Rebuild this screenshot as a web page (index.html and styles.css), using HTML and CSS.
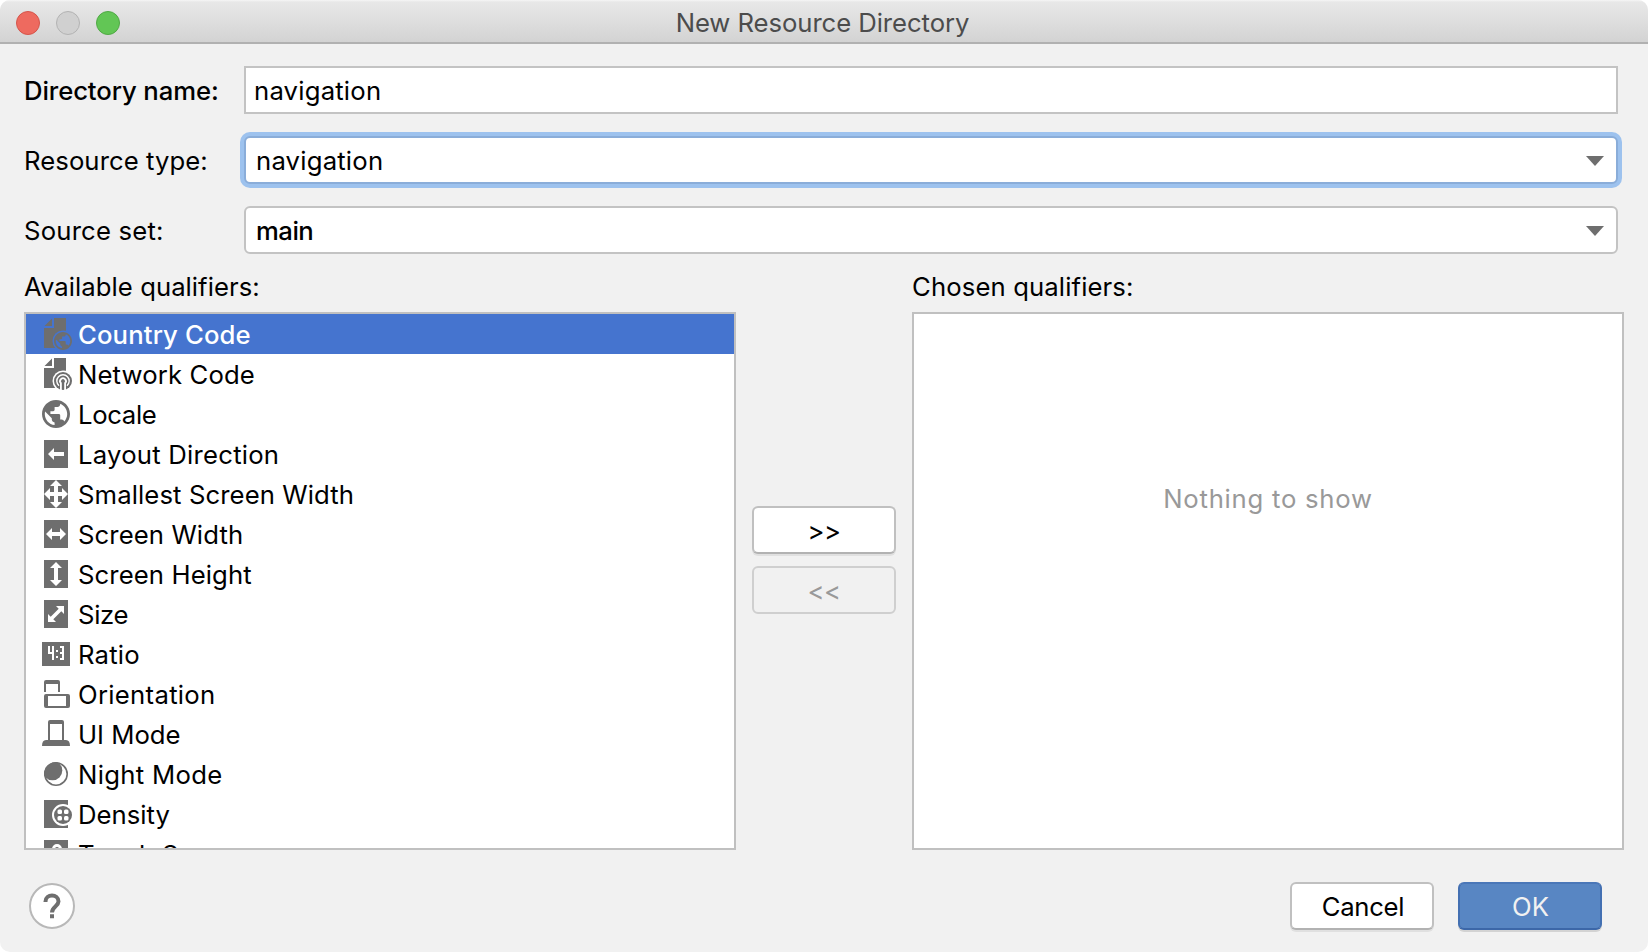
FILE: index.html
```
<!DOCTYPE html>
<html lang="en">
<head>
<meta charset="utf-8">
<title>New Resource Directory</title>
<link rel="stylesheet" href="styles.css">
</head>
<body>
<div class="dialog">
  <header class="titlebar">
    <div class="lights"><span class="light close"></span><span class="light min"></span><span class="light max"></span></div>
    <h1 class="title"><span class="t-title">New Resource Directory</span></h1>
  </header>
  <main class="content">
    <div class="form">
      <div class="row"><label class="label"><span class="t-dir">Directory name:</span></label><div class="field text"><span class="t-nav">navigation</span></div></div>
      <div class="row"><label class="label"><span class="t-type">Resource type:</span></label><div class="field combo focused"><span class="t-nav">navigation</span><svg class="arrow" viewBox="0 0 18 10"><path d="M0 0H18L9 10Z"/></svg></div></div>
      <div class="row"><label class="label"><span class="t-set">Source set:</span></label><div class="field combo"><span class="t-main">main</span><svg class="arrow" viewBox="0 0 18 10"><path d="M0 0H18L9 10Z"/></svg></div></div>
    </div>
    <div class="lists">
      <section class="pane">
        <h2 class="heading"><span class="t-avail">Available qualifiers:</span></h2>
        <ul class="list">
          <li class="item selected"><svg class="icon" viewBox="0 0 32 32"><mask id="cut"><path fill="#fff" d="M0 0H32V32H0Z"/><circle cx="23" cy="23" r="10.500" fill="#000"/></mask><path mask="url(#cut)" d="M4.500 8L12 .5V8ZM14 0H26V30H4V10H14Z"/><path transform="translate(12.200 12.200) scale(.9)" d="M12 2C6.480 2 2 6.480 2 12s4.480 10 10 10 10-4.480 10-10S17.520 2 12 2zm-1 17.930c-3.950-.49-7-3.850-7-7.930 0-.62.08-1.210.21-1.790L9 15v1c0 1.100.9 2 2 2v1.930zm6.900-2.540c-.26-.81-1-1.390-1.900-1.390h-1v-3c0-.55-.45-1-1-1H8v-2h2c.55 0 1-.45 1-1V7h2c1.100 0 2-.9 2-2v-.41c2.930 1.190 5 4.060 5 7.410 0 2.080-.8 3.970-2.100 5.390z"/></svg><span class="t-i1">Country Code</span></li>
          <li class="item"><svg class="icon" viewBox="0 0 32 32"><path mask="url(#cut)" d="M4.500 8L12 .5V8ZM14 0H26V30H4V10H14Z"/><circle cx="23" cy="23" r="9"/><path class="wline arc" d="M19 27.700A6.200 6.200 0 1 1 27 27.700"/><path class="wline leg" d="M20.900 32V25.200A2.900 2.900 0 1 1 25.100 25.200V32"/></svg><span class="t-i2">Network Code</span></li>
          <li class="item"><svg class="icon" viewBox="0 0 32 32"><path transform="translate(-.8 -.8) scale(1.400)" d="M12 2C6.480 2 2 6.480 2 12s4.480 10 10 10 10-4.480 10-10S17.520 2 12 2zm-1 17.930c-3.950-.49-7-3.850-7-7.930 0-.62.08-1.210.21-1.790L9 15v1c0 1.100.9 2 2 2v1.930zm6.900-2.540c-.26-.81-1-1.390-1.900-1.390h-1v-3c0-.55-.45-1-1-1H8v-2h2c.55 0 1-.45 1-1V7h2c1.100 0 2-.9 2-2v-.41c2.930 1.190 5 4.060 5 7.410 0 2.080-.8 3.970-2.100 5.390z"/></svg><span class="t-i3">Locale</span></li>
          <li class="item"><svg class="icon" viewBox="0 0 32 32"><path d="M4 2H28V30H4Z"/><path class="w" d="M8 16L14 10V14H24V18H14V22Z"/></svg><span class="t-i4">Layout Direction</span></li>
          <li class="item"><svg class="icon" viewBox="0 0 32 32"><path d="M4 2H28V30H4Z"/><path class="w" d="M16 2L22 8H18V14H22V10L28 16L22 22V18H18V24H22L16 30L10 24H14V18H10V22L4 16L10 10V14H14V8H10Z"/></svg><span class="t-i5">Smallest Screen Width</span></li>
          <li class="item"><svg class="icon" viewBox="0 0 32 32"><path d="M4 2H28V30H4Z"/><path class="w" d="M6 16L12 10V14H20V10L26 16L20 22V18H12V22Z"/></svg><span class="t-i6">Screen Width</span></li>
          <li class="item"><svg class="icon" viewBox="0 0 32 32"><path d="M4 2H28V30H4Z"/><path class="w" d="M16 4L22 10H18V22H22L16 28L10 22H14V10H10Z"/></svg><span class="t-i7">Screen Height</span></li>
          <li class="item"><svg class="icon" viewBox="0 0 32 32"><path d="M4 2H28V30H4Z"/><path class="w" d="M24 8V16L21.300 13.300L13.300 21.300L16 24H8V16L10.700 18.700L18.700 10.700L16 8Z"/></svg><span class="t-i8">Size</span></li>
          <li class="item"><svg class="icon" viewBox="0 0 32 32"><path d="M2 4H30V28H2Z"/><path class="w" d="M8 8H10V14H12V8H14V22H12V16H8ZM16 12H18V14H16ZM16 18H18V20H16ZM20 8H24V22H20V20H22V16H20V14H22V10H20Z"/></svg><span class="t-i9">Ratio</span></li>
          <li class="item"><svg class="icon" viewBox="0 0 32 32"><path d="M4 14V4Q4 2 6 2H18Q20 2 20 4V14H18V6H6V14ZM6 16H28Q30 16 30 18V28Q30 30 28 30H6Q4 30 4 28V18Q4 16 6 16ZM8 18V28H26V18Z" fill-rule="evenodd"/></svg><span class="t-i10">Orientation</span></li>
          <li class="item"><svg class="icon" viewBox="0 0 32 32"><path d="M8 22V4Q8 2 10 2H22Q24 2 24 4V22H26Q30 22 30 28H2Q2 22 6 22ZM10 6V22H22V6Z" fill-rule="evenodd"/></svg><span class="t-i11">UI Mode</span></li>
          <li class="item"><svg class="icon" viewBox="0 0 32 32"><clipPath id="moon"><circle cx="16" cy="16" r="12"/></clipPath><circle cx="16" cy="16" r="11.200" fill="none" stroke="#6e6e6e" stroke-width="1.600"/><circle cx="12.500" cy="12.500" r="9.800" clip-path="url(#moon)"/></svg><span class="t-i12">Night Mode</span></li>
          <li class="item"><svg class="icon" viewBox="0 0 32 32"><path d="M4 2H28V30H4Z"/><circle class="w" cx="23" cy="17" r="11"/><circle cx="23" cy="17" r="9"/><g class="w"><rect x="17.500" y="11.500" width="4.500" height="4.500" rx="1.500"/><rect x="24" y="11.500" width="4.500" height="4.500" rx="1.500"/><rect x="17.500" y="18" width="4.500" height="4.500" rx="1.500"/><rect x="24" y="18" width="4.500" height="4.500" rx="1.500"/></g></svg><span class="t-i13">Density</span></li>
          <li class="item"><svg class="icon" viewBox="0 0 32 32"><path d="M4 2H28V30H4Z"/><path class="w" d="M12 16V11A5 5 0 0 1 22 11V16H19V11A2 2 0 0 0 15 11V16Z"/></svg><span class="t-i14">Touch Screen</span></li>
        </ul>
      </section>
      <div class="movers"><button class="btn"><span class="t-mv">&gt;&gt;</span></button><button class="btn disabled"><span class="t-mv">&lt;&lt;</span></button></div>
      <section class="pane">
        <h2 class="heading"><span class="t-chosen">Chosen qualifiers:</span></h2>
        <div class="list empty"><span class="t-none">Nothing to show</span></div>
      </section>
    </div>
    <footer class="footer">
      <button class="help"><svg viewBox="0 0 46 46"><path class="q" d="M16.500 19V18.500C16.500 10.500 29.500 10.500 29.500 18.500C29.500 23 23 23.500 23 29.500"/><path class="qd" d="M21 31.300h4v4h-4z"/></svg></button>
      <div class="actions"><button class="btn"><span class="t-cancel">Cancel</span></button><button class="btn primary"><span class="t-ok">OK</span></button></div>
    </footer>
  </main>
</div>
</body>
</html>
```
FILE: styles.css
```
* { box-sizing: border-box; }
body { margin: 0; background: #fff; }
.dialog { width: 1648px; height: 952px; background: #f1f1f1; border-radius: 10px; overflow: hidden; font: 25.7px/40px Inter, "Liberation Sans", sans-serif; color: #000; }
.titlebar { height: 44px; padding: 0 2px 0 16px; display: grid; grid-template-columns: 1fr auto 1fr; align-items: center; background: linear-gradient(#f6f6f6, #e8e8e8 2px, #d3d3d3 42px); border-bottom: 2px solid #b1b1b1; }
.lights { display: flex; gap: 16px; padding-top: 2px; }
.light { width: 24px; height: 24px; border-radius: 50%; border: 1px solid; }
.close { background: #ee6a5f; border-color: #d5554b; }
.min { background: #d0d0d0; border-color: #b3b3b3; }
.max { background: #62c655; border-color: #50a945; }
.title { margin: 0 17px 0 0; padding-top: 3px; font: inherit; color: #4c4c4c; }
.content { padding: 22px 24px 0; }
.form { display: flex; flex-direction: column; gap: 22px; padding-right: 6px; }
.row { display: flex; height: 48px; align-items: center; }
.label { width: 220px; white-space: nowrap; padding-top: 2px; }
.field { flex: 1; height: 48px; border: 2px solid #c3c3c3; background: #fff; display: flex; align-items: center; padding-left: 8px; }
.field span { padding-top: 2px; }
.combo { border-radius: 6px; padding: 0 12px 0 10px; justify-content: space-between; }
.focused { border-color: #8aadd9; box-shadow: 0 0 0 4px #9dc2ee; }
.arrow { width: 18px; height: 10px; margin-top: 2px; fill: #6e6e6e; }
.lists { display: flex; padding-top: 12px; }
.pane { width: 712px; }
.heading { margin: 0 0 6px; padding-top: 1px; font: inherit; height: 40px; }
.list { margin: 0; padding: 0; list-style: none; height: 538px; border: 2px solid #c0c0c0; background: #fff; overflow: hidden; }
.item { height: 40px; display: flex; align-items: center; gap: 6px; padding-left: 14px; white-space: nowrap; }
.item span { padding-top: 2px; }
.selected { background: #4574cf; color: #fff; font-weight: 500; }
.icon { width: 32px; height: 32px; flex: none; fill: #6e6e6e; }
.w { fill: #fff; }
.wline { fill: none; stroke: #fff; }
.arc { stroke-width: 1.4; }
.leg { stroke-width: 1.8; }
.list.empty { color: #999; text-align: center; padding-top: 165px; }
.movers { width: 176px; padding: 240px 16px 0; display: flex; flex-direction: column; gap: 12px; }
.btn { width: 144px; height: 48px; padding: 2px 0 0; border: 2px solid #c0c0c0; border-bottom-color: #b2b2b2; border-radius: 6px; background: #fff; font: inherit; color: #000; box-shadow: 0 2px 0 #e0e0e0; }
.disabled { background: #f1f1f1; border-color: #cfcfcf; color: #999; box-shadow: none; }
.primary { background: #5886c3; border-color: #4a77b8 #4370b2 #3c67a8; color: #f1f1f1; box-shadow: 0 2px 0 #d3d3d3; }
.footer { display: flex; justify-content: space-between; padding: 32px 22px 0 5px; }
.help { width: 46px; height: 46px; margin-top: 1px; padding: 0; border: 2px solid #b8b8b8; border-radius: 50%; background: #fff; }
.help svg { display: block; width: 46px; height: 46px; margin: -2px; }
.q { fill: none; stroke: #6e6e6e; stroke-width: 4; }
.qd { fill: #6e6e6e; }
.actions { display: flex; gap: 24px; }
/* per-label tracking */
.t-title { letter-spacing: -.07px; }
.t-dir { font-weight: 450; letter-spacing: -.1px; }
.t-type { letter-spacing: .07px; }
.t-set { letter-spacing: .19px; }
.t-nav { letter-spacing: .2px; }
.t-main { font-weight: 450; letter-spacing: -.5px; }
.t-avail { letter-spacing: .04px; }
.t-chosen { letter-spacing: .12px; }
.t-i1 { letter-spacing: .13px; }
.t-i2 { letter-spacing: .13px; }
.t-i3 { letter-spacing: -.35px; }
.t-i4 { letter-spacing: .23px; }
.t-i5, .t-i6, .t-i7 { letter-spacing: .1px; }
.t-i8 { letter-spacing: -.3px; }
.t-i9 { letter-spacing: .2px; }
.t-i10, .t-i12, .t-i14 { letter-spacing: .3px; }
.t-none { letter-spacing: .75px; }
.t-cancel { letter-spacing: -.3px; padding-left: 2px; }
.t-ok { padding-left: 1px; }
.t-mv { letter-spacing: -.5px; }
```
